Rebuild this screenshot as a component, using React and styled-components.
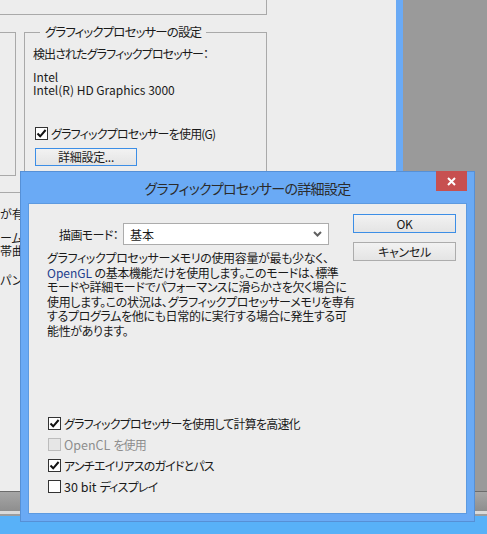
import React from "react";
import styled, { createGlobalStyle } from "styled-components";

const font = `"Noto Sans CJK JP", "Noto Sans", sans-serif`;

const Global = createGlobalStyle`
  html, body {
    margin: 0;
    padding: 0;
    width: 487px;
    height: 534px;
    overflow: hidden;
  }
  body {
    font-family: ${font};
    font-feature-settings: "palt";
    color: #1a1a1a;
  }
`;

const Page = styled.div`
  position: relative;
  width: 487px;
  height: 534px;
  display: flex;
  flex-direction: column;
  overflow: hidden;
  background: #58b1f8;
`;

const TopArea = styled.div`
  display: flex;
  height: 491px;
`;

const BgWindow = styled.div`
  width: 396px;
  border-right: 7px solid #6aaaf5;
  background: #ededed;
  display: flex;
  flex-direction: column;
  overflow: hidden;
  font-size: 12px;
`;

const Backdrop = styled.div`
  flex: 1;
  background: #9a9a9a;
`;

const Strip = styled.div`
  height: 25px;
  border-top: 1px solid #6c6c6c;
  box-sizing: border-box;
  background: linear-gradient(
    to bottom,
    #a6a6a6 0px,
    #8e8e8e 19px,
    #dadada 19px,
    #dadada 22px,
    #9c9c9c 22px,
    #9c9c9c 24px
  );
`;

const Desktop = styled.div`
  flex: 1;
`;

const groupLine = "#a9a9a9";

const TopGroup = styled.div`
  width: 266px;
  height: 14px;
  border-right: 1px solid ${groupLine};
  border-bottom: 1px solid ${groupLine};
`;

const GroupRow = styled.div`
  display: flex;
  align-items: flex-start;
  height: 154px;
  margin-top: 9px;
`;

const SideGroup = styled.div`
  width: 15px;
  height: 142px;
  margin-top: 8px;
  border: 1px solid ${groupLine};
  border-left: none;
`;

const GroupBox = styled.fieldset`
  box-sizing: border-box;
  width: 243px;
  height: 152px;
  margin: 0 0 0 8px;
  padding: 0 0 0 8px;
  border: 1px solid ${groupLine};
  min-width: 0;
`;

const Legend = styled.legend`
  margin-left: 7px;
  padding: 0 5px;
  font-size: 12.5px;
  line-height: 16px;
  letter-spacing: -0.9px;
  color: #1a1a1a;
`;

const Line = styled.div`
  line-height: ${(p) => p.$lh || 14}px;
  margin-top: ${(p) => p.$mt || 0}px;
  letter-spacing: ${(p) => p.$ls || 0}px;
  white-space: nowrap;
`;

const LowerGroup = styled.div`
  width: 266px;
  margin-top: 14px;
  border-top: 1px solid ${groupLine};
  padding-top: 14px;
`;

const Check = styled.label`
  display: flex;
  align-items: center;
  height: ${(p) => p.$h || 16}px;
  margin-top: ${(p) => p.$mt || 0}px;
  margin-left: ${(p) => p.$ml || 0}px;
  font-size: 12px;
  letter-spacing: -0.8px;
  white-space: nowrap;
  color: ${(p) => (p.$disabled ? "#8d8d8d" : "#1a1a1a")};
`;

const Word = styled.span`
  font-size: 12.5px;
  letter-spacing: 0;
  margin-right: 3px;
`;

const Box = styled.span`
  box-sizing: border-box;
  width: 13px;
  height: 13px;
  margin-right: 3px;
  border: 1px solid ${(p) => (p.$disabled ? "#bcbcbc" : "#333")};
  background: ${(p) => (p.$disabled ? "#e6e6e6" : "#fff")};
  display: flex;
  align-items: center;
  justify-content: center;
  flex-shrink: 0;
`;

function CheckBox({ checked, disabled, children, ...rest }) {
  return (
    <Check $disabled={disabled} {...rest}>
      <Box $disabled={disabled}>
        {checked && (
          <svg width="11" height="11" viewBox="0 0 11 11">
            <path d="M1.5 5.5 L4.2 8.3 L9.6 2" fill="none" stroke="#111" strokeWidth="2" />
          </svg>
        )}
      </Box>
      {children}
    </Check>
  );
}

const Button = styled.button`
  box-sizing: border-box;
  flex-shrink: 0;
  width: ${(p) => p.$w || 103}px;
  height: ${(p) => p.$h || 19}px;
  margin: ${(p) => p.$margin || 0};
  padding: 0;
  font-family: ${font};
  font-feature-settings: "palt";
  font-size: 12px;
  letter-spacing: -0.3px;
  line-height: 1;
  color: #1a1a1a;
  border: 1px solid ${(p) => (p.$default ? "#3c8ee6" : "#acacac")};
  background: linear-gradient(to bottom, #f2f2f2, #e4e4e4);
`;

const Dialog = styled.div`
  position: absolute;
  left: 20px;
  top: 171px;
  width: 455px;
  height: 351px;
  box-sizing: border-box;
  border: 1px solid #5690d6;
  background: #6aaaf5;
  padding: 0 7px 7px;
  display: flex;
  flex-direction: column;
`;

const TitleBar = styled.div`
  position: relative;
  height: 30px;
  display: flex;
  align-items: center;
  justify-content: center;
  font-size: 14px;
  letter-spacing: -0.7px;
  color: #2b2b2b;
  padding-top: 1px;
`;

const Close = styled.div`
  position: absolute;
  top: -1px;
  right: 0px;
  width: 31px;
  height: 20px;
  background: #c75050;
  display: flex;
  align-items: center;
  justify-content: center;
`;

const Content = styled.div`
  flex: 1;
  display: flex;
  border: 1px solid #5d9ae0;
  background: #ededed;
  font-size: 12px;
`;

const LeftPane = styled.div`
  flex: 1;
  min-width: 0;
  padding: 19px 0 0 18px;
`;

const ModeRow = styled.div`
  display: flex;
  align-items: center;
  padding-left: 12px;
`;

const ModeLabel = styled.span`
  width: 64px;
  letter-spacing: -0.6px;
  white-space: nowrap;
`;

const Select = styled.div`
  box-sizing: border-box;
  width: 206px;
  height: 22px;
  border: 1px solid #acacac;
  background: #fff;
  display: flex;
  align-items: center;
  justify-content: space-between;
  padding: 0 6px 0 6px;
  font-size: 12px;
`;

const Description = styled.p`
  margin: 6px 0 0;
  line-height: 14.5px;
  letter-spacing: -0.35px;
  white-space: nowrap;
`;

const Latin = styled.span`
  color: #23408e;
  letter-spacing: 0;
`;

const CheckList = styled.div`
  margin-top: 75px;
`;

const RightPane = styled.div`
  display: flex;
  flex-direction: column;
  padding: 10px 10px 0 0;
`;

export default function App() {
  return (
    <>
      <Global />
      <Page>
        <TopArea>
          <BgWindow>
            <TopGroup />
            <GroupRow>
              <SideGroup />
              <GroupBox>
                <Legend>グラフィックプロセッサーの設定</Legend>
                <Line $mt={7} $ls={-0.9}>検出されたグラフィックプロセッサー：</Line>
                <Line $mt={9} $lh={13}>Intel</Line>
                <Line $lh={13}>Intel(R) HD Graphics 3000</Line>
                <CheckBox checked $mt={29} $ml={2}>
                  グラフィックプロセッサーを使用(G)
                </CheckBox>
                <Button $w={102} $h={18} $margin="7px 0 0 2px" $default>
                  詳細設定...
                </Button>
              </GroupBox>
            </GroupRow>
            <LowerGroup>
              <Line>が有効な</Line>
              <Line $mt={10} $lh={13}>ーム、</Line>
              <Line $lh={13}>帯曲彩</Line>
              <Line $mt={16}>パンお</Line>
            </LowerGroup>
          </BgWindow>
          <Backdrop />
        </TopArea>
        <Strip />
        <Desktop />

        <Dialog>
          <TitleBar>
            グラフィックプロセッサーの詳細設定
            <Close>
              <svg width="9" height="9" viewBox="0 0 9 9">
                <path d="M1 1 L8 8 M8 1 L1 8" stroke="#fff" strokeWidth="2" />
              </svg>
            </Close>
          </TitleBar>
          <Content>
            <LeftPane>
              <ModeRow>
                <ModeLabel>描画モード：</ModeLabel>
                <Select>
                  <span>基本</span>
                  <svg width="9" height="6" viewBox="0 0 9 6">
                    <path d="M1 1 L4.5 4.5 L8 1" fill="none" stroke="#606060" strokeWidth="2" />
                  </svg>
                </Select>
              </ModeRow>
              <Description>
                グラフィックプロセッサーメモリの使用容量が最も少なく、
                <br />
                <Latin>OpenGL</Latin> の基本機能だけを使用します。このモードは、標準
                <br />
                モードや詳細モードでパフォーマンスに滑らかさを欠く場合に
                <br />
                使用します。この状況は、グラフィックプロセッサーメモリを専有
                <br />
                するプログラムを他にも日常的に実行する場合に発生する可
                <br />
                能性があります。
              </Description>
              <CheckList>
                <CheckBox checked $h={21} $ml={1}>
                  グラフィックプロセッサーを使用して計算を高速化
                </CheckBox>
                <CheckBox disabled $h={21} $ml={1}>
                  <Word>OpenCL</Word>を使用
                </CheckBox>
                <CheckBox checked $h={21} $ml={1}>
                  アンチエイリアスのガイドとパス
                </CheckBox>
                <CheckBox $h={21} $ml={1}>
                  <Word>30 bit</Word>ディスプレイ
                </CheckBox>
              </CheckList>
            </LeftPane>
            <RightPane>
              <Button $default>OK</Button>
              <Button $margin="9px 0 0 0">キャンセル</Button>
            </RightPane>
          </Content>
        </Dialog>
      </Page>
    </>
  );
}
